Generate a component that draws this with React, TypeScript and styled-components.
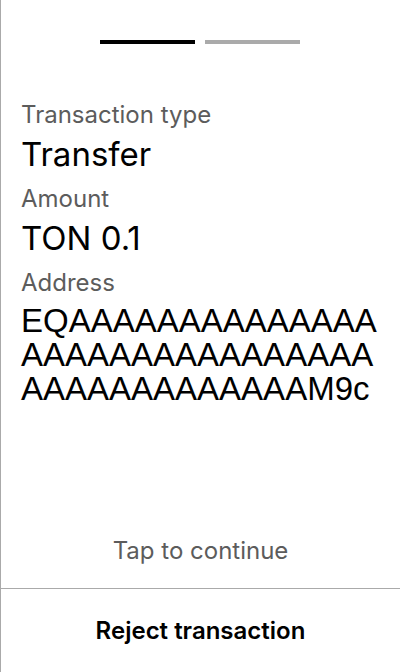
import React from "react";
import styled, { createGlobalStyle } from "styled-components";

const GlobalStyle = createGlobalStyle`
  html, body { margin: 0; padding: 0; background: #fff; }
  body { font-family: Inter, "Noto Sans", sans-serif; }
  * { box-sizing: border-box; }
`;

const Screen = styled.div`
  height: 672px;
  width: 400px;
  display: flex;
  flex-direction: column;
  border-left: 1px solid #aaaaaa;
  background: #fff;
`;

const Main = styled.div`
  flex: 1;
  display: flex;
  flex-direction: column;
  padding: 40px 21px 0 20px;
  cursor: pointer;
`;

const Steps = styled.div`
  display: flex;
  justify-content: center;
  gap: 10px;
  margin-left: -1px;
  margin-right: -21px;
  padding-right: 20px;
`;

const Step = styled.div<{ $active?: boolean }>`
  width: 95px;
  height: 4px;
  background: ${(p) => (p.$active ? "#000" : "#aaaaaa")};
`;

const Fields = styled.div`
  display: flex;
  flex-direction: column;
  margin-top: 57px;
`;

const Label = styled.div`
  font-family: Inter, sans-serif;
  font-size: 24px;
  line-height: 28px;
  color: #5c5c5c;
`;

const Value = styled.div`
  font-family: Inter, sans-serif;
  font-size: 33px;
  line-height: 36px;
  color: #000;
  margin: 7px 0 13px;
`;

const Address = styled.div`
  font-family: "Liberation Sans", Arial, sans-serif;
  font-size: 33px;
  line-height: 34px;
  color: #000;
  margin-top: 7px;
  word-break: break-all;
`;

const Spacer = styled.div`
  flex: 1;
`;

const Hint = styled.div`
  font-family: Inter, sans-serif;
  font-size: 24px;
  line-height: 28px;
  color: #5c5c5c;
  text-align: center;
  padding-bottom: 23px;
  margin-left: -20px;
  margin-right: -21px;
`;

const RejectButton = styled.button`
  height: 84px;
  width: 100%;
  border: none;
  border-top: 1px solid #aaaaaa;
  background: #fff;
  font-family: Inter, sans-serif;
  font-weight: 600;
  font-size: 24px;
  color: #000;
  cursor: pointer;
  padding: 0;
`;

export default function App() {
  const address = "EQ" + "A".repeat(43) + "M9c";
  return (
    <>
      <GlobalStyle />
      <Screen>
        <Main>
          <Steps>
            <Step $active />
            <Step />
          </Steps>
          <Fields>
            <Label>Transaction type</Label>
            <Value>Transfer</Value>
            <Label>Amount</Label>
            <Value>TON 0.1</Value>
            <Label>Address</Label>
            <Address>{address}</Address>
          </Fields>
          <Spacer />
          <Hint>Tap to continue</Hint>
        </Main>
        <RejectButton>Reject transaction</RejectButton>
      </Screen>
    </>
  );
}
